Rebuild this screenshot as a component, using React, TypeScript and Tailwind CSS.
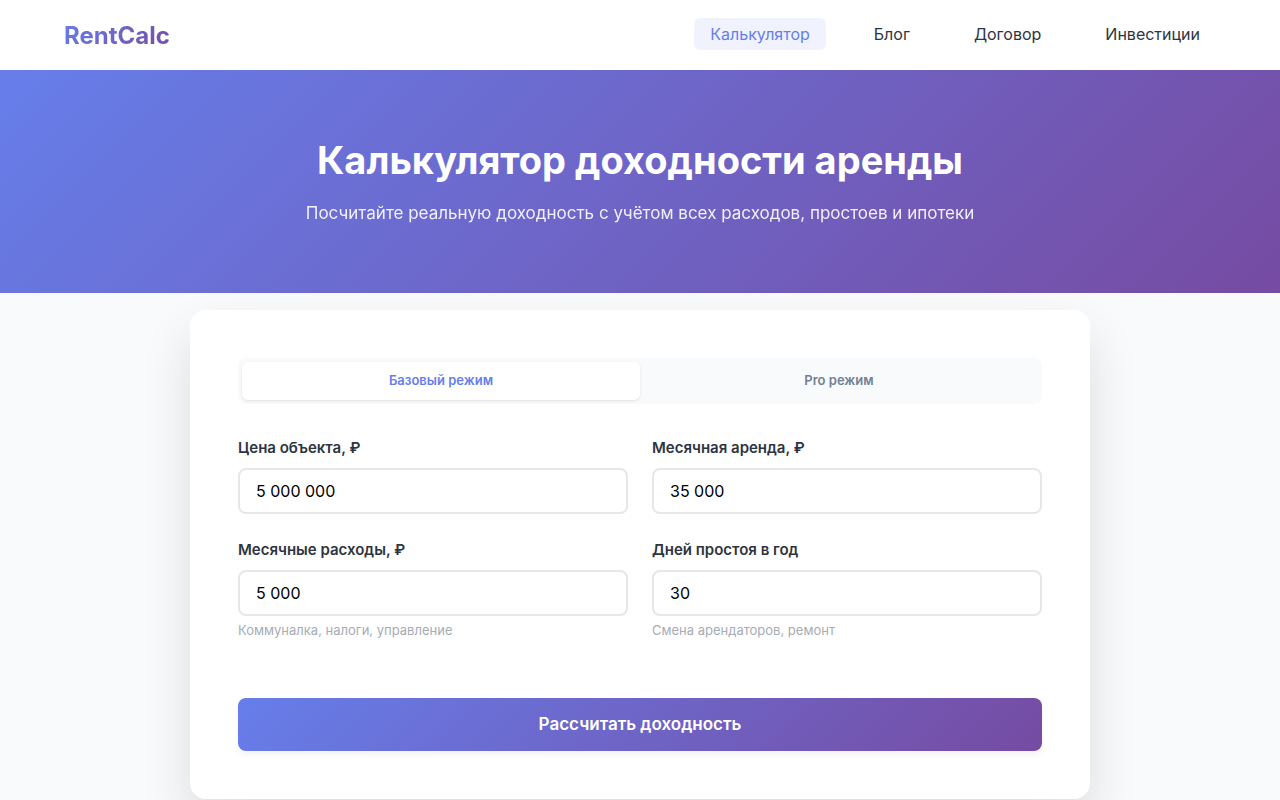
import { useState } from "react";

const navLinks = [
  { label: "Калькулятор", href: "#calculator" },
  { label: "Блог", href: "#blog" },
  { label: "Договор", href: "#contract" },
  { label: "Инвестиции", href: "#investments" },
];

const fields = [
  { id: "price", label: "Цена объекта, ₽", value: "5 000 000", hint: "" },
  { id: "rent", label: "Месячная аренда, ₽", value: "35 000", hint: "" },
  { id: "expenses", label: "Месячные расходы, ₽", value: "5 000", hint: "Коммуналка, налоги, управление" },
  { id: "idle", label: "Дней простоя в год", value: "30", hint: "Смена арендаторов, ремонт" },
];

const modes = ["Базовый режим", "Pro режим"];

// ── Header ──
const Header = () => (
  <header className="bg-white">
    <div className="max-w-[1200px] mx-auto h-[70px] px-6 pt-[2px] flex items-center justify-between">
      <a
        href="#"
        className="text-2xl font-bold bg-linear-[135deg,#667eea_0%,#764ba2_100%] bg-clip-text text-transparent"
      >
        RentCalc
      </a>
      <nav className="flex gap-8 pb-1">
        {navLinks.map((link, index) => (
          <a
            key={link.href}
            href={link.href}
            className={`px-4 py-1 rounded-md ${
              index === 0 ? "bg-[#f0f3fe] text-[#667eea]" : "text-[#2d3440] hover:text-[#667eea]"
            }`}
          >
            {link.label}
          </a>
        ))}
      </nav>
    </div>
  </header>
);

// ── Component ──
const App = () => {
  const [mode, setMode] = useState(0);

  return (
    <div className="min-h-screen bg-[#f8fafb] font-['Inter',sans-serif] text-[#2d3440]">
      <Header />

      {/* Hero */}
      <section className="bg-linear-[135deg,#667eea_0%,#764ba2_100%] px-6 py-16 text-center text-white">
        <h1 className="text-[38px] leading-[52px] font-bold mb-3">
          Калькулятор доходности аренды
        </h1>
        <p className="text-[17px] leading-[31px] opacity-90">
          Посчитайте реальную доходность с учётом всех расходов, простоев и ипотеки
        </p>
      </section>

      <main className="px-6 pt-[17px]">
        <form
          onSubmit={(e) => e.preventDefault()}
          className="max-w-[900px] mx-auto bg-white rounded-2xl p-12 shadow-[0_25px_50px_rgba(0,0,0,0.12)]"
        >
          {/* Mode switch */}
          <div className="flex p-1 mb-8 rounded-lg bg-[#f8fafb]">
            {modes.map((label, index) => (
              <button
                key={label}
                type="button"
                onClick={() => setMode(index)}
                className={`flex-1 h-[38px] rounded-md text-[13px] font-semibold ${
                  mode === index
                    ? "bg-white text-[#667eea] shadow-[0_1px_3px_rgba(0,0,0,0.1)]"
                    : "text-[#718096]"
                }`}
              >
                {label}
              </button>
            ))}
          </div>

          <div className="grid grid-cols-2 gap-6">
            {fields.map((field) => (
              <div key={field.id}>
                <label htmlFor={field.id} className="block mb-2 text-[15px] leading-6 font-semibold">
                  {field.label}
                </label>
                <input
                  id={field.id}
                  defaultValue={field.value}
                  className="block w-full h-[46px] px-4 border-2 border-[#e5e7eb] rounded-lg text-base text-black outline-none focus:border-[#667eea]"
                />
                {field.hint && <p className="mt-1 text-[13px] leading-5 text-[#a6acb6]">{field.hint}</p>}
              </div>
            ))}
          </div>

          <button
            type="submit"
            className="w-full h-[53px] mt-[58px] rounded-lg bg-linear-[135deg,#667eea_0%,#764ba2_100%] text-white text-[17px] font-semibold shadow-[0_4px_6px_rgba(0,0,0,0.05)]"
          >
            Рассчитать доходность
          </button>
        </form>
      </main>
    </div>
  );
};

export default App;
